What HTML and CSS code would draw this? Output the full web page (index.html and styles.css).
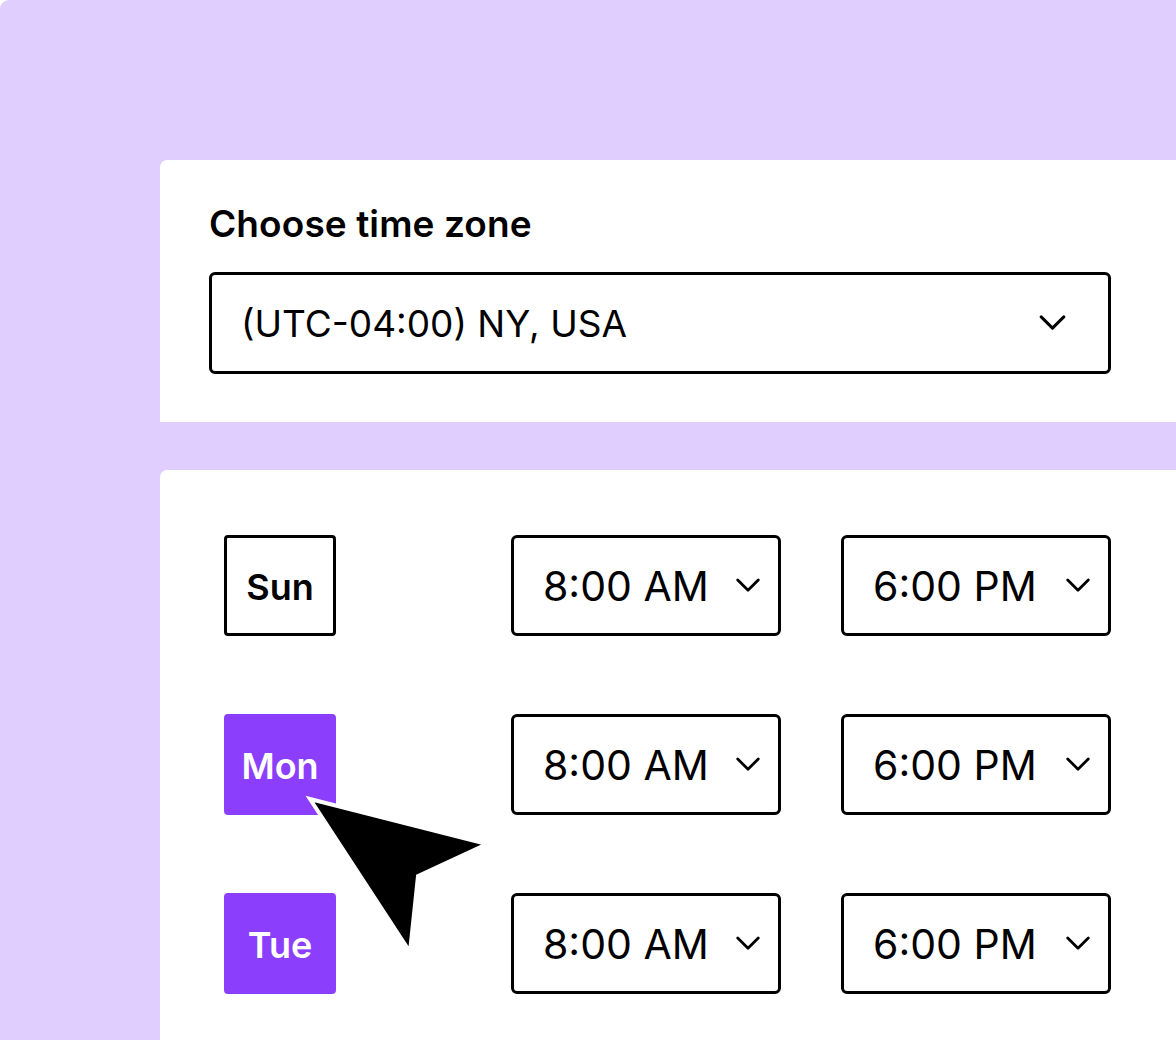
FILE: index.html
```html
<!DOCTYPE html>
<html lang="en">
<head>
<meta charset="utf-8">
<title>Availability</title>
<link rel="stylesheet" href="styles.css">
</head>
<body>
<div class="canvas">
  <section class="card card-zone">
    <h2 class="label">Choose time zone</h2>
    <div class="select select-zone">
      <span class="select-text">(UTC-04:00) NY, USA</span>
      <svg class="chev chev-lg" viewBox="0 0 28 17"><path d="M2 2 L14 14 L26 2" /></svg>
    </div>
  </section>
  <section class="card card-hours">
    <div class="rows">
      <div class="day">Sun</div>
      <div class="select time"><span class="time-text">8:00 AM</span><svg class="chev" viewBox="0 0 28 17"><path d="M2 2 L14 14 L26 2" /></svg></div>
      <div class="select time"><span class="time-text">6:00 PM</span><svg class="chev" viewBox="0 0 28 17"><path d="M2 2 L14 14 L26 2" /></svg></div>

      <div class="day day-on">Mon</div>
      <div class="select time"><span class="time-text">8:00 AM</span><svg class="chev" viewBox="0 0 28 17"><path d="M2 2 L14 14 L26 2" /></svg></div>
      <div class="select time"><span class="time-text">6:00 PM</span><svg class="chev" viewBox="0 0 28 17"><path d="M2 2 L14 14 L26 2" /></svg></div>

      <div class="day day-on">Tue</div>
      <div class="select time"><span class="time-text">8:00 AM</span><svg class="chev" viewBox="0 0 28 17"><path d="M2 2 L14 14 L26 2" /></svg></div>
      <div class="select time"><span class="time-text">6:00 PM</span><svg class="chev" viewBox="0 0 28 17"><path d="M2 2 L14 14 L26 2" /></svg></div>
    </div>
  </section>
  <svg class="cursor" viewBox="0 0 200 170" width="200" height="170">
    <path d="M10 9 L187 54 L118 86 L110 162 Z" />
  </svg>
</div>
</body>
</html>
```

FILE: styles.css
```css
* { box-sizing: border-box; }
html, body { margin: 0; padding: 0; background: #ffffff; }
body {
  font-family: "Inter", "Liberation Sans", sans-serif;
  color: #000;
  width: 1176px;
  height: 1040px;
  overflow: hidden;
}
.canvas {
  position: relative;
  width: 1176px;
  height: 1040px;
  background: #dfcefe;
  border-top-left-radius: 9px;
  padding: 160px 0 0 160px;
  display: flex;
  flex-direction: column;
  gap: 48px;
}
.card {
  background: #ffffff;
  border-top-left-radius: 7px;
}
.card-zone {
  height: 262px;
  padding: 44px 65px 0 49px;
}
.label {
  margin: 0 0 28px;
  font-size: 37px;
  line-height: 40px;
  font-weight: 600;
  letter-spacing: 0.1px;
}
.select {
  border: 3px solid #000;
  border-radius: 6px;
  display: flex;
  align-items: center;
  background: #fff;
}
.select-zone {
  height: 102px;
  padding: 0 42px 0 29px;
  justify-content: space-between;
}
.select-text {
  font-size: 37px;
  font-weight: 400;
}
.chev {
  width: 24px;
  height: 15px;
  fill: none;
  stroke: #000;
  stroke-width: 3.2;
  stroke-linecap: round;
  stroke-linejoin: round;
}
.chev-lg { width: 27px; height: 16px; }
.card-hours {
  flex: 1;
  padding: 65px 0 0 64px;
}
.rows {
  display: grid;
  grid-template-columns: 227px 270px 270px;
  column-gap: 60px;
  row-gap: 78px;
  grid-auto-rows: 101px;
}
.day {
  width: 112px;
  border: 3px solid #000;
  border-radius: 4px;
  display: flex;
  align-items: center;
  justify-content: center;
  font-size: 36px;
  font-weight: 600;
  padding-top: 3px;
}
.day-on {
  background: #8b3ffd;
  border-color: #8b3ffd;
  color: #fff;
}
.time {
  padding: 0 18px 0 29px;
  justify-content: space-between;
}
.time-text { font-size: 41px; font-weight: 400; }
.cursor {
  position: absolute;
  left: 300px;
  top: 790px;
  overflow: visible;
}
.cursor path {
  fill: #000;
  stroke: #fff;
  stroke-width: 4;
  stroke-linejoin: miter;
}
```
